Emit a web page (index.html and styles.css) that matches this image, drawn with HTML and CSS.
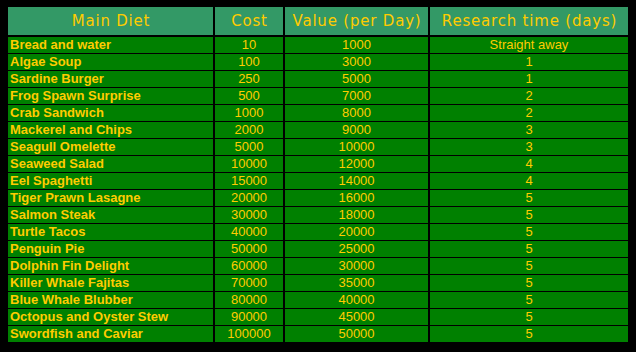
FILE: index.html
```html
<!DOCTYPE html>
<html>
<head>
<meta charset="utf-8">
<link rel="stylesheet" href="styles.css">
</head>
<body>
<div class="diet">
  <div class="hd">Main Diet</div>
  <div class="hd">Cost</div>
  <div class="hd">Value (per Day)</div>
  <div class="hd">Research time (days)</div>

  <div class="c name">Bread and water</div><div class="c">10</div><div class="c">1000</div><div class="c">Straight away</div>
  <div class="c name">Algae Soup</div><div class="c">100</div><div class="c">3000</div><div class="c">1</div>
  <div class="c name">Sardine Burger</div><div class="c">250</div><div class="c">5000</div><div class="c">1</div>
  <div class="c name">Frog Spawn Surprise</div><div class="c">500</div><div class="c">7000</div><div class="c">2</div>
  <div class="c name">Crab Sandwich</div><div class="c">1000</div><div class="c">8000</div><div class="c">2</div>
  <div class="c name">Mackerel and Chips</div><div class="c">2000</div><div class="c">9000</div><div class="c">3</div>
  <div class="c name">Seagull Omelette</div><div class="c">5000</div><div class="c">10000</div><div class="c">3</div>
  <div class="c name">Seaweed Salad</div><div class="c">10000</div><div class="c">12000</div><div class="c">4</div>
  <div class="c name">Eel Spaghetti</div><div class="c">15000</div><div class="c">14000</div><div class="c">4</div>
  <div class="c name">Tiger Prawn Lasagne</div><div class="c">20000</div><div class="c">16000</div><div class="c">5</div>
  <div class="c name">Salmon Steak</div><div class="c">30000</div><div class="c">18000</div><div class="c">5</div>
  <div class="c name">Turtle Tacos</div><div class="c">40000</div><div class="c">20000</div><div class="c">5</div>
  <div class="c name">Penguin Pie</div><div class="c">50000</div><div class="c">25000</div><div class="c">5</div>
  <div class="c name">Dolphin Fin Delight</div><div class="c">60000</div><div class="c">30000</div><div class="c">5</div>
  <div class="c name">Killer Whale Fajitas</div><div class="c">70000</div><div class="c">35000</div><div class="c">5</div>
  <div class="c name">Blue Whale Blubber</div><div class="c">80000</div><div class="c">40000</div><div class="c">5</div>
  <div class="c name">Octopus and Oyster Stew</div><div class="c">90000</div><div class="c">45000</div><div class="c">5</div>
  <div class="c name">Swordfish and Caviar</div><div class="c">100000</div><div class="c">50000</div><div class="c">5</div>
</div>
</body>
</html>
```
FILE: styles.css
```css
html, body {
  margin: 0;
  background: #000;
}
body {
  padding: 7px 8px;
}
.diet {
  display: grid;
  grid-template-columns: 205px 68px 143px 198px;
  grid-template-rows: 29px;
  grid-auto-rows: 16px;
  column-gap: 2px;
  row-gap: 1px;
  color: #ffcc00;
  font-family: "Liberation Sans", Arial, sans-serif;
  font-size: 13px;
}
.hd {
  height: 28px;
  background: #339966;
  font-family: "DejaVu Sans", Verdana, sans-serif;
  font-size: 15px;
  letter-spacing: 0.8px;
  padding-left: 1px;
  display: flex;
  align-items: center;
  justify-content: center;
}
.c {
  background: #008000;
  line-height: 16px;
  text-align: center;
  white-space: nowrap;
}
.c.name {
  text-align: left;
  padding-left: 2px;
  font-weight: bold;
}
```
